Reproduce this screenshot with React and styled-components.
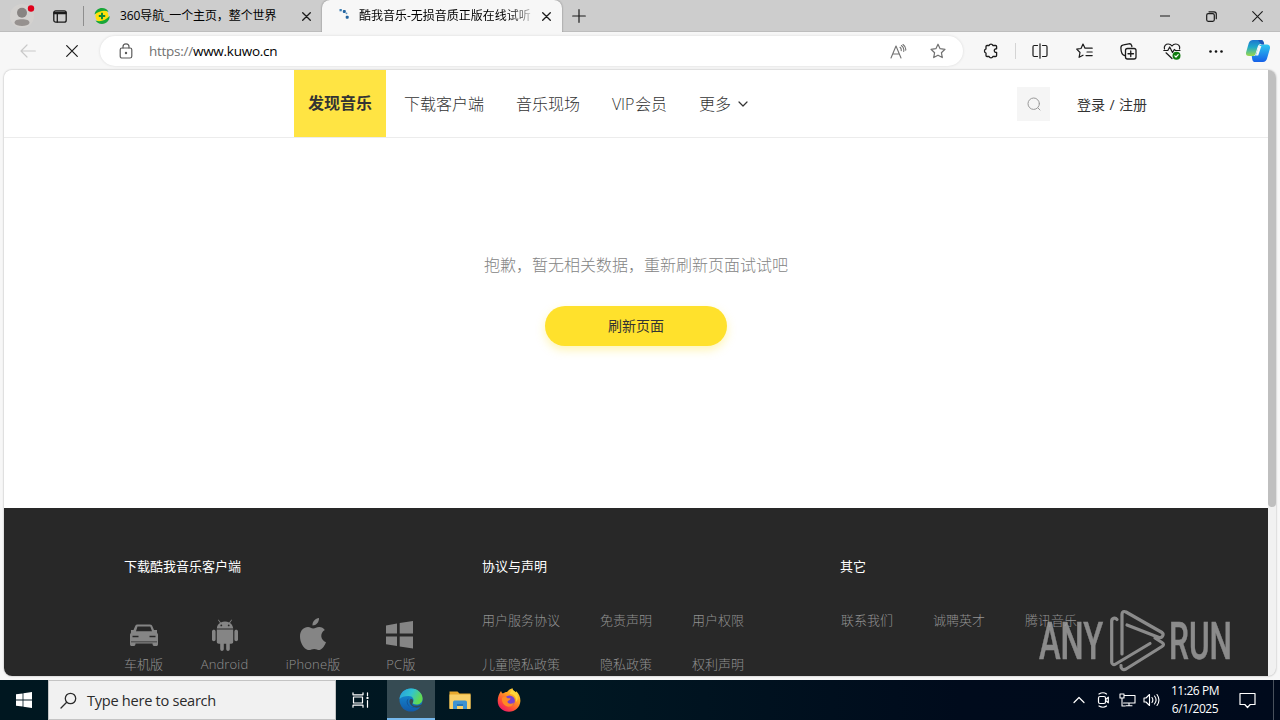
import React from "react";
import styled, { createGlobalStyle } from "styled-components";

const GlobalStyle = createGlobalStyle`
  * {
    box-sizing: border-box;
  }
  body {
    margin: 0;
    overflow: hidden;
    font-family: "Open Sans", "Noto Sans CJK SC", sans-serif;
  }
  svg {
    display: block;
    flex-shrink: 0;
  }
`;

const Screen = styled.div`
  position: relative;
  display: flex;
  flex-direction: column;
  width: 1280px;
  height: 720px;
  overflow: hidden;
  background: #f7f7f7;
`;

/* Browser chrome */

const TitleBar = styled.div`
  display: flex;
  align-items: center;
  height: 32px;
  background: #cdcdcd;
  box-shadow: inset 0 -1px 0 #bdbdbd;
`;

const Slot = styled.div`
  display: flex;
  align-items: center;
  justify-content: center;
  flex: 0 0 ${(p) => p.$w}px;
  height: 100%;
  color: ${(p) => p.$color || "#1b1b1b"};
`;

const Divider = styled.div`
  width: 1px;
  height: ${(p) => p.$h}px;
  background: ${(p) => p.$color};
`;

const Tab = styled.div`
  display: flex;
  align-items: center;
  width: ${(p) => p.$w}px;
  height: 32px;
  padding: 0 8px 0 ${(p) => (p.$active ? 15 : 3)}px;
  border-radius: 8px 8px 0 0;
  background: ${(p) => (p.$active ? "#f7f7f7" : "transparent")};
  box-shadow: ${(p) => (p.$active ? "0 0 2px rgba(0, 0, 0, 0.45)" : "none")};
  clip-path: ${(p) => (p.$active ? "inset(0 -3px 0 -3px)" : "none")};
`;

const TabTitle = styled.span`
  flex: 1;
  margin-left: ${(p) => (p.$active ? 7 : 10)}px;
  overflow: hidden;
  font-size: 12px;
  line-height: 18px;
  letter-spacing: ${(p) => (p.$active ? 0 : -0.1)}px;
  white-space: nowrap;
  color: #000;
  ${(p) =>
    p.$active &&
    "-webkit-mask-image: linear-gradient(90deg, #000 150px, transparent 178px);"}
`;

const Grow = styled.div`
  flex: 1;
`;

const Toolbar = styled.div`
  display: flex;
  align-items: center;
  height: 38px;
`;

const AddressBar = styled.div`
  display: flex;
  align-items: center;
  width: 863px;
  height: 30px;
  margin: 0 6px;
  padding-left: 4px;
  border-radius: 15px;
  background: #fff;
  box-shadow: 0 0 3px rgba(0, 0, 0, 0.12);
`;

const Url = styled.span`
  flex: 1;
  margin-left: 1px;
  font-size: 13.5px;
  letter-spacing: -0.26px;
  color: #000;

  span {
    color: #717171;
  }
`;

/* Page */

const Viewport = styled.div`
  display: flex;
  height: 606px;
  margin: 0 4px 4px;
  border-radius: 8px;
  overflow: hidden;
  background: #f1f1f1;
  box-shadow: 0 0 2px rgba(0, 0, 0, 0.35);
`;

const Page = styled.div`
  display: flex;
  flex-direction: column;
  width: 1264px;
  background: #fff;
`;

const Scrollbar = styled.div`
  width: 8px;
  height: 437px;
  border-radius: 0 6px 4px 4px;
  background: #bfbfbf;
`;

const Header = styled.header`
  display: flex;
  align-items: center;
  height: 68px;
  padding-left: 290px;
  border-bottom: 1px solid #ececec;
  color: #333;
`;

const Nav = styled.nav`
  display: flex;
  align-items: center;
  gap: 32px;
  flex: 1;
  height: 100%;
  font-size: 16px;
  font-weight: 300;
`;

const ActiveLink = styled.a`
  display: flex;
  align-items: center;
  justify-content: center;
  width: 92px;
  height: 67px;
  margin-right: -14px;
  padding-bottom: 3px;
  background: #ffe443;
  font-weight: 700;
  color: #333;
`;

const NavLink = styled.a`
  display: flex;
  align-items: center;
  line-height: 22px;
  white-space: nowrap;

  svg {
    margin: 1px 0 0 7px;
  }
`;

const Latin = styled.span`
  display: inline-block;
  width: 23px;
  letter-spacing: -0.2px;
`;

const SearchButton = styled.button`
  display: flex;
  align-items: center;
  justify-content: center;
  width: 33px;
  height: 34px;
  padding: 0;
  border: 0;
  background: #f5f5f5;
  color: #999;
`;

const Login = styled.a`
  width: 191px;
  margin-left: 27px;
  padding-top: 1px;
  font-size: 14px;
  word-spacing: 0.8px;
`;

const Empty = styled.main`
  display: flex;
  flex-direction: column;
  align-items: center;
  height: 370px;
  padding-top: 115px;
`;

const Message = styled.p`
  margin: 0;
  font-size: 16px;
  font-weight: 300;
  line-height: 24px;
  color: #848484;
`;

const Refresh = styled.button`
  width: 182px;
  height: 40px;
  margin-top: 29px;
  padding: 0 0 2px;
  border: 0;
  border-radius: 20px;
  background: #ffe12c;
  box-shadow: 0 4px 10px rgba(255, 225, 44, 0.35);
  font-family: inherit;
  font-size: 14px;
  color: #333;
`;

const Footer = styled.footer`
  display: grid;
  grid-template-columns: 358px 358px 358px;
  flex: 1;
  padding: 48px 0 0 120px;
  overflow: hidden;
  background: #282828;
`;

const FooterTitle = styled.h2`
  margin: 0;
  font-size: 13px;
  font-weight: 400;
  line-height: 20px;
  color: #fff;
`;

const Apps = styled.div`
  display: grid;
  grid-template-columns: 39px 123px 54px 122px;
  margin-top: 41px;
`;

const AppItem = styled.a`
  display: flex;
  flex-direction: column;
  align-items: center;
  font-size: 13px;
  font-weight: 300;
  line-height: 20px;
  letter-spacing: ${(p) => p.$spacing || 0}px;
  white-space: nowrap;
  color: #929292;

  svg {
    color: #858585;
  }
`;

const Links = styled.div`
  display: grid;
  grid-template-columns: ${(p) => p.$first}px 52px 52px;
  gap: 24px 40px;
  margin-top: 34px;
  padding-left: ${(p) => p.$indent || 0}px;
  font-size: 13px;
  font-weight: 300;
  line-height: 20px;
  white-space: nowrap;
  color: #929292;
`;

const Watermark = styled.div`
  position: absolute;
  left: 1036px;
  top: 606px;
`;

/* Windows taskbar */

const Taskbar = styled.div`
  display: flex;
  align-items: center;
  height: 40px;
  background: linear-gradient(90deg, #001720 0%, #001722 45%, #000b1c 75%, #000a1c 100%);
`;

const TaskSearch = styled.div`
  display: flex;
  align-items: center;
  width: 288px;
  height: 40px;
  padding-left: 11px;
  border: 1px solid #c4c4c4;
  background: #f1f1f1;
  font-size: 14.6px;
  letter-spacing: -0.28px;
  color: #2b2b2b;

  svg {
    margin-right: 10px;
  }
`;

const RunningApp = styled(Slot)`
  margin-left: 3px;
  background: #364b53;
  box-shadow: inset 0 -2px 0 #76b9ed;
`;

const Clock = styled.div`
  width: 64px;
  font-size: 12px;
  line-height: 18px;
  letter-spacing: -0.45px;
  text-align: center;
  white-space: nowrap;
  color: #fff;
`;

const Icon = ({ w = 18, h = w, sw = 1.2, box, children }) => (
  <svg
    width={w}
    height={h}
    viewBox={box || `0 0 ${w} ${h}`}
    fill="none"
    stroke="currentColor"
    strokeWidth={sw}
    strokeLinecap="round"
    strokeLinejoin="round"
  >
    {children}
  </svg>
);

const Cross = ({ size = 9, sw = 1.3 }) => (
  <Icon w={size} sw={sw}>
    <path d={`M.7.7 ${size - 0.7} ${size - 0.7}M${size - 0.7} .7.7 ${size - 0.7}`} />
  </Icon>
);

const STAR = "M8 1.2l2.1 4.5 4.9.6-3.6 3.4.9 4.9L8 12.2l-4.3 2.4.9-4.9L1 6.3l4.9-.6z";

const BrowserTabs = () => (
  <TitleBar>
    <Slot $w={44}>
      <svg width="26" height="26" viewBox="0 0 26 26">
        <circle cx="13" cy="13" r="12" fill="#d3d1cf" />
        <circle cx="13" cy="9.700" r="5" fill="#888482" />
        <path d="M5.500 20c0-3 3-3.800 7.500-3.800s7.500.8 7.500 3.800c-1 2.300-4 3-7.500 3s-6.500-.7-7.500-3z" fill="#96918f" />
        <circle cx="22" cy="5.500" r="3.200" fill="#e0001b" />
      </svg>
    </Slot>
    <Slot $w={32}>
      <Icon w={14} h={13} sw={1.3}>
        <rect x=".8" y=".8" width="12.400" height="11.400" rx="2" />
        <path d="M1 2.300h12M1 3.500h12M4.300 4v8" />
      </Icon>
    </Slot>
    <Slot $w={15}>
      <Divider $h={20} $color="#8e8e8e" />
    </Slot>
    <Tab $w={229}>
      <svg width="16" height="16" viewBox="0 0 16 16">
        <circle cx="8" cy="8" r="6.600" fill="#ffe10a" />
        <path d="M.6 6.500C1 2.500 4.500 0 8 0c3 0 5.500 1.500 6.500 4C11 2 6 2.500.6 6.500z" fill="#17a637" />
        <path d="M15.600 8c.3 4-3 8-7.600 8-3 0-5-1.200-6.500-3.500C6 14 11 13 15.600 8z" fill="#17a637" />
        <path d="M8 4.800v6.400M4.800 8h6.400" stroke="#128d35" strokeWidth="2" />
      </svg>
      <TabTitle>360导航_一个主页，整个世界</TabTitle>
      <Slot $w={11}>
        <Cross />
      </Slot>
    </Tab>
    <Slot $w={2} />
    <Tab $w={240} $active>
      <svg width="15" height="16" viewBox="0 0 15 16" fill="#2364a0">
        <rect x="2.500" y="1" width="2.300" height="2.300" fill="#3f7fb3" />
        <rect x="5.800" y="2" width="3" height="3" rx="1" />
        <rect x="8.700" y="7.800" width="3" height="3" rx="1" />
        <circle cx="9.500" cy="5.300" r=".9" fill="#5f92bd" />
      </svg>
      <TabTitle $active>酷我音乐-无损音质正版在线试听</TabTitle>
      <Slot $w={16}>
        <Cross />
      </Slot>
    </Tab>
    <Slot $w={34}>
      <Icon w={14}>
        <path d="M7 .7v12.600M.7 7h12.600" />
      </Icon>
    </Slot>
    <Grow />
    <Slot $w={46}>
      <Icon w={10} h={2}>
        <path d="M.5 1h9" />
      </Icon>
    </Slot>
    <Slot $w={46}>
      <Icon w={11}>
        <rect x=".7" y="2.700" width="7.600" height="7.600" rx="1.500" />
        <path d="M3 .8h5c1.500 0 2.300.8 2.300 2.300v4.600" />
      </Icon>
    </Slot>
    <Slot $w={46}>
      <Cross size={11} sw={1.1} />
    </Slot>
  </TitleBar>
);

const BrowserToolbar = () => (
  <Toolbar>
    <Slot $w={55} $color="#c9c9c9">
      <Icon w={16} h={14}>
        <path d="M15.300 7H1M7 1 1 7l6 6" />
      </Icon>
    </Slot>
    <Slot $w={34}>
      <Cross size={12} sw={1.2} />
    </Slot>
    <Slot $w={5} />
    <AddressBar>
      <Slot $w={44} $color="#5c5c5c">
        <Icon w={14} h={16}>
          <rect x="1.200" y="5" width="11.600" height="10" rx="1.800" />
          <path d="M4 5V3.800a3 3 0 0 1 6 0V5" />
          <circle cx="7" cy="10" r=".6" fill="currentColor" />
        </Icon>
      </Slot>
      <Url>
        <span>https://</span>www.kuwo.cn
      </Url>
      <Slot $w={40} $color="#717171">
        <Icon w={17} h={15} sw={1.1}>
          <path d="M1 14 6 2l5 12M2.700 10h6.600M10 3.300c1 .8 1.400 2 1.200 3.300M11.400 1.500c2 1.400 2.800 3.500 2.300 6M13 .5c2 1.400 3 3.500 2.700 5.700" />
        </Icon>
      </Slot>
      <Slot $w={40} $color="#717171">
        <Icon w={16}>
          <path d={STAR} />
        </Icon>
      </Slot>
      <Slot $w={5} />
    </AddressBar>
    <Slot $w={44}>
      <Icon w={16} sw={1.3}>
        <path d="M4 2.500h2.100a2 2 0 0 1 3.800 0h2.700c.6 0 1 .4 1 1v2.300c-3-.6-3.200 4 0 3.600v3.100c0 .6-.4 1-1 1H9.900a2 2 0 0 1-3.800 0H4c-.6 0-1-.4-1-1v-2.400a2.200 2.200 0 0 1 0-4.200V3.500c0-.6.4-1 1-1z" />
      </Icon>
    </Slot>
    <Slot $w={5}>
      <Divider $h={16} $color="#d4d4d4" />
    </Slot>
    <Slot $w={44}>
      <Icon w={16}>
        <path d="M5.500 2.500H2.200c-.7 0-1.200.5-1.200 1.200v8.600c0 .7.5 1.200 1.200 1.200h3.300M10.500 2.500h3.300c.7 0 1.200.5 1.200 1.200v8.600c0 .7-.5 1.200-1.200 1.200h-3.300M8 .8v14.400" />
      </Icon>
    </Slot>
    <Slot $w={44}>
      <Icon w={17} h={16}>
        <path d="M9.500 5.200h6.700M11 9h5.200M10 12.600h6.200M9 5.200 7 1 5 5.500l-4.300.7 3.300 3.300-.9 4.800L7 12.200" />
      </Icon>
    </Slot>
    <Slot $w={44}>
      <Icon w={17} h={17} sw={1.3}>
        <path d="M4.500 12.500C2.600 12 1 9 .9 5 .8 3 2 2 3.500 1.800l5.300-1c1.500-.2 2.500.5 2.900 1.800l.2.900" />
        <rect x="5.500" y="5.500" width="10.500" height="10.500" rx="2" />
        <path d="M10.750 8v5.500M8 10.750h5.500" />
      </Icon>
    </Slot>
    <Slot $w={44}>
      <Icon w={18} h={17}>
        <path d="M1.500 6C.5 2.800 3 1 5.200 1 7 1 8.300 2 9 3c.7-1 2-2 3.800-2 2.400 0 4.700 2 3.700 5M.8 7.500h4L6.700 4l2.800 5.500 1.800-3 1.200 1H17M3 9.800l6 5.700" />
        <circle cx="13.500" cy="12.800" r="4" fill="#107c10" stroke="none" />
        <path d="m11.800 12.800 1.200 1.200 2.200-2.300" stroke="#fff" />
      </Icon>
    </Slot>
    <Slot $w={44}>
      <svg width="14" height="3" viewBox="0 0 14 3" fill="#111">
        <circle cx="1.500" cy="1.500" r="1.300" />
        <circle cx="7" cy="1.500" r="1.300" />
        <circle cx="12.500" cy="1.500" r="1.300" />
      </svg>
    </Slot>
    <Slot $w={40}>
      <svg width="24" height="22" viewBox="0 0 24 22">
        <defs>
          <linearGradient id="cpLeft" x2="0" y2="1">
            <stop offset="0" stopColor="#1b76cf" />
            <stop offset=".45" stopColor="#1fa9c9" />
            <stop offset="1" stopColor="#9bd94a" />
          </linearGradient>
          <linearGradient id="cpRight" x2="0" y2="1">
            <stop offset="0" stopColor="#2cc8ef" />
            <stop offset="1" stopColor="#1660e8" />
          </linearGradient>
        </defs>
        <path d="M7 0h8c2 0 2.600 1.500 3.200 4h-3c-2 0-3 1-3.600 3L9.500 14c-.6 1.500-1.500 2-3 2H3c-2.500 0-3.500-1.500-2.800-4l2.600-9C3.500 1 5 0 7 0z" fill="url(#cpLeft)" />
        <path d="M17 22H9c-2 0-2.800-1.500-3.200-6h1c2 0 3-.8 3.600-2.800L13 6.500C13.600 5 14.500 4.500 16 4.500h5c2.500 0 3.500 2 2.800 4.500l-2.600 9c-.7 2.500-2.200 4-4.200 4z" fill="url(#cpRight)" />
        <path d="M12.600 6h2.800l-3.200 9.500H8.500c1 0 1.600-.6 2-1.800z" fill="#f7f7f7" />
        <path d="M12 0h3c2 0 2.600 1.500 3.200 4.500h-2.500C14.500 4 13.500 2 12 0z" fill="#1d57b8" />
      </svg>
    </Slot>
  </Toolbar>
);

const apps = [
  {
    name: "车机版",
    icon: (
      <path
        fillRule="evenodd"
        d="M9 7.500h13c1.500 0 2 .8 2.500 2L26 13h3v2.500l1 2V27c0 1.500-.5 2-2 2h-2c-1 0-1.500-1-1.500-2.500h-17C7.500 28 7 29 6 29H4c-1.500 0-2-.5-2-2v-9.500l1-2V13h2.500L7 9.500c.5-1.200 1-2 2-2zM9.500 9.500 8 14.200h16l-1.700-4.700zM4.500 18.800v1.400h6v-1.400zm17 0v1.400h6v-1.400zM3 24.500v.8h26v-.8z"
      />
    ),
  },
  {
    name: "Android",
    spacing: 0.15,
    icon: (
      <path
        fillRule="evenodd"
        d="M9.500 2.500 11.800 5.400A10 10 0 0 1 20.200 5.400L22.500 2.500l.5.4-2 3c2 1.300 3 3.200 3.200 5.600H7.800C8 9 9 7.200 11 5.900l-2-3zM12.300 7.500a.9.900 0 1 0 0 1.800.9.900 0 0 0 0-1.800zm7.400 0a.9.900 0 1 0 0 1.800.9.900 0 0 0 0-1.800zM7.800 12.500h16.400v12.300c0 1.200-.7 2-2 2h-1.400v5.200c0 2.600-3.600 2.600-3.600 0v-5.200h-2.400v5.200c0 2.600-3.600 2.600-3.600 0v-5.200H9.800c-1.300 0-2-.8-2-2zM3 14.500c0-2.300 3.600-2.300 3.600 0v8c0 2.300-3.600 2.300-3.600 0zM25.400 14.500c0-2.300 3.600-2.300 3.600 0v8c0 2.300-3.600 2.300-3.600 0z"
      />
    ),
  },
  {
    name: "iPhone版",
    spacing: 0.15,
    icon: (
      <path d="M22 1c.3 4-2.800 7.500-6.500 7.500C15.200 4.700 18.300 1.500 22 1zM11 10c2.300 0 3.200 1.400 5.200 1.400S19.500 10 22.200 10c2.500 0 4.300 1.200 5.600 3-5.300 3.200-4.400 10 1.200 12.200-1 2.700-3.300 6.600-5.800 7.600-2 .8-3.400-.9-6-.9s-3.800 1.600-6.300 1C6.500 31.800 3 25.500 3 19.500 3 13.500 6.700 10 11 10z" />
    ),
  },
  {
    name: "PC版",
    spacing: 0.3,
    icon: (
      <path d="M1 8.500 12 6.500v10H1zM14.700 6 28 4v12.500H14.700zM1 19.500h11V29L1 27.300zM14.700 19.500H28v12l-13.300-2z" />
    ),
  },
];

const policyLinks = ["用户服务协议", "免责声明", "用户权限", "儿童隐私政策", "隐私政策", "权利声明"];
const otherLinks = ["联系我们", "诚聘英才", "腾讯音乐"];

const KuwoPage = () => (
  <Viewport>
    <Page>
      <Header>
        <Nav>
          <ActiveLink>发现音乐</ActiveLink>
          <NavLink>下载客户端</NavLink>
          <NavLink>音乐现场</NavLink>
          <NavLink>
            <Latin>VIP</Latin>会员
          </NavLink>
          <NavLink>
            更多
            <Icon w={10} h={6}>
              <path d="m1 1 4 4 4-4" />
            </Icon>
          </NavLink>
        </Nav>
        <SearchButton>
          <Icon w={14} sw={1}>
            <circle cx="6.700" cy="6.700" r="5.700" />
            <path d="m11 11 2 2" />
          </Icon>
        </SearchButton>
        <Login>登录 / 注册</Login>
      </Header>
      <Empty>
        <Message>抱歉，暂无相关数据，重新刷新页面试试吧</Message>
        <Refresh>刷新页面</Refresh>
      </Empty>
      <Footer>
        <section>
          <FooterTitle>下载酷我音乐客户端</FooterTitle>
          <Apps>
            {apps.map(({ name, icon, spacing }) => (
              <AppItem key={name} $spacing={spacing}>
                <svg width="32" height="37" viewBox="0 0 32 37" fill="currentColor">
                  {icon}
                </svg>
                {name}
              </AppItem>
            ))}
          </Apps>
        </section>
        <section>
          <FooterTitle>协议与声明</FooterTitle>
          <Links $first={78}>
            {policyLinks.map((link) => (
              <a key={link}>{link}</a>
            ))}
          </Links>
        </section>
        <section>
          <FooterTitle>其它</FooterTitle>
          <Links $first={52} $indent={1}>
            {otherLinks.map((link) => (
              <a key={link}>{link}</a>
            ))}
          </Links>
        </section>
      </Footer>
    </Page>
    <Scrollbar />
  </Viewport>
);

const AnyRun = () => (
  <Watermark>
    <svg width="220" height="70" viewBox="0 0 220 70" fill="#a4a4a4" opacity=".8">
      <g fontFamily="Roboto, sans-serif" fontSize="52" fontWeight="500" stroke="#a4a4a4" strokeWidth=".5">
        <text transform="translate(3 53) scale(.6 1)" textLength="107" lengthAdjust="spacingAndGlyphs">
          ANY
        </text>
        <text transform="translate(133 53) scale(.6 1)" textLength="105" lengthAdjust="spacingAndGlyphs">
          RUN
        </text>
      </g>
      <g fill="none" stroke="#a4a4a4" strokeWidth="3.200" strokeLinejoin="round" strokeLinecap="round">
        <path d="M81 13.500c-2-2.500-5.300-1-5.300 1.500v41c0 2.500 2 3.300 4 2L114 37.500" />
        <path d="M86 48V8c0-2.500 2-3 4-2l36 20.500c2.500 2 0 6-3 5L91 19" />
        <path d="m119 32 7 4.500c2 1.300 2 2.700 0 4L90 63c-3 1.500-5.500-.5-5-3.500" />
      </g>
    </svg>
  </Watermark>
);

const WindowsTaskbar = () => (
  <Taskbar>
    <Slot $w={48}>
      <svg width="16" height="16" viewBox="0 0 16 16" fill="#fff">
        <path d="M0 2.300 6.600 1.400v6.200H0zM7.400 1.300 16 0v7.600H7.400zM0 8.400h6.600v6.200L0 13.700zM7.400 8.400H16V16l-8.600-1.300z" />
      </svg>
    </Slot>
    <TaskSearch>
      <Icon w={17} sw={1.3}>
        <circle cx="10.500" cy="6.500" r="5.200" />
        <path d="M6.700 10.300 1 16" />
      </Icon>
      Type here to search
    </TaskSearch>
    <Slot $w={48} $color="#fff">
      <Icon w={17} h={16}>
        <path d="M1 .8v2h10v-2M1 15.200v-2h10v2M1.500 5h9v6h-9zM15.500.8v3M15.500 8.500v6.700" />
        <rect x="14.500" y="5" width="2" height="2" fill="#fff" stroke="none" />
      </Icon>
    </Slot>
    <RunningApp $w={48}>
      <svg width="24" height="24" viewBox="0 0 24 24">
        <defs>
          <linearGradient id="edgeTop" x2="1" y2=".4">
            <stop offset="0" stopColor="#279bdd" />
            <stop offset=".55" stopColor="#32c4cf" />
            <stop offset="1" stopColor="#62da50" />
          </linearGradient>
          <linearGradient id="edgeLow" x2="0" y2="1">
            <stop offset="0" stopColor="#1593d9" />
            <stop offset="1" stopColor="#125aa9" />
          </linearGradient>
        </defs>
        <circle cx="12" cy="12" r="11.500" fill="url(#edgeLow)" />
        <path d="M.5 11C1 4.500 6 .4 12 .4c7 0 11.600 5 11.600 10 0 4-3 6-6.200 6-3 0-4.200-1.200-3.600-2 2-2.800 0-6.400-4.300-6.400C5.500 8 2 9 .5 11z" fill="url(#edgeTop)" />
        <path d="M9.800 10.500c-3.500 4 .5 9.700 6 9.300 2.500 0 4.500-1 6-2l-.5 1C16 22 7.500 19 7.700 13.500c0-1.500 1-2.500 2.100-3z" fill="#124c91" />
        <path d="M13.800 14.400c-2.500 3 3.500 5.200 9.200 1.500L22 18c-5 3.500-12 0-11.500-5 .2-1 .6-1.800 1.500-2.300 2 .2 2.800 2.200 1.800 3.700z" fill="#364b53" />
      </svg>
    </RunningApp>
    <Slot $w={49}>
      <svg width="22" height="20" viewBox="0 0 22 20">
        <path d="M.5 1.500h8l2 2h11v15H.5z" fill="#e8a92d" />
        <path d="M.5 4.500h21V19H.5z" fill="#f9d068" />
        <path d="M4 19v-6.500c0-1.500 1-2 2-2h10c1.500 0 2 .7 2 2V19h-4v-3.500H8V19z" fill="#3e93d1" />
        <path d="M8 14h6v2H8z" fill="#2676b8" />
      </svg>
    </Slot>
    <Slot $w={49}>
      <svg width="24" height="24" viewBox="0 0 24 24">
        <defs>
          <linearGradient id="fox" x1="1" y1="0" x2=".3" y2="1">
            <stop offset="0" stopColor="#fff04a" />
            <stop offset=".4" stopColor="#ffa61f" />
            <stop offset=".75" stopColor="#ff5136" />
            <stop offset="1" stopColor="#ed1c64" />
          </linearGradient>
        </defs>
        <path d="M4 3c.3 1.200.9 2 1.800 2.600C7 4.600 8.500 4 10 4c1.500-2 3.200-3 5.500-3.800.3 2 1.500 3 3 4.300l.8-1.200C22 6 23.500 9 23.400 13 23 19.500 18 23.700 12 23.700S.7 19.500.7 13C.6 9 2 6 4 3z" fill="url(#fox)" />
        <circle cx="12.500" cy="12.800" r="5.400" fill="#7842d1" />
        <path d="M5 10c2.500-2 4.500-1 5.500.2h3c0 2-2.500 2.300-3 3.300 0 2.500 4 3 6.500 1-1 4-5 5-8 3.500-3-1.500-4.500-4.500-4-8z" fill="#ff8a24" />
        <path d="M13 6c3-.5 7 3 6 8 3-3 2-8-1-10.500l-3-2c-1 1.200-2 3-2 4.500z" fill="#ffd53a" />
      </svg>
    </Slot>
    <Grow />
    <Slot $w={24} $color="#fff">
      <Icon w={12} h={8}>
        <path d="m1 6.500 5-5 5 5" />
      </Icon>
    </Slot>
    <Slot $w={24} $color="#fff">
      <Icon w={12} h={16}>
        <rect x="1.500" y="4.500" width="7" height="7" rx="1.500" />
        <path d="m9 7.200 2.300-2v5.600L9 8.800M2 2c2.500-1.500 5.500-1.500 7.500 0M2 14c2.500 1.500 5.500 1.500 7.500 0" />
      </Icon>
    </Slot>
    <Slot $w={24} $color="#fff">
      <Icon w={17} h={14} sw={1.1}>
        <path d="M5.500 2.500H16V10H4.500M10 10v2.700M7 12.800h6M1 1h4v4H1zM3 5v8h3" />
      </Icon>
    </Slot>
    <Slot $w={24} $color="#fff">
      <Icon w={17} h={14} sw={1.1}>
        <path d="M1 5h2l3.500-3.500v11L3 9H1zM9 4.500c1 1.500 1 3.500 0 5M11.500 3c2 2.500 2 5.500 0 8M14 1.500c2.500 3.500 2.500 7.500 0 11" />
      </Icon>
    </Slot>
    <Clock>
      11:26 PM
      <br />
      6/1/2025
    </Clock>
    <Slot $w={40} $color="#fff">
      <Icon w={17} h={17}>
        <path d="M1 1.500h15v11h-4.800L8.500 15.500l-2.700-3H1z" />
      </Icon>
    </Slot>
    <Slot $w={13}>
      <Divider $h={40} $color="#48515c" />
    </Slot>
  </Taskbar>
);

const App = () => (
  <Screen>
    <GlobalStyle />
    <BrowserTabs />
    <BrowserToolbar />
    <KuwoPage />
    <WindowsTaskbar />
    <AnyRun />
  </Screen>
);

export default App;
